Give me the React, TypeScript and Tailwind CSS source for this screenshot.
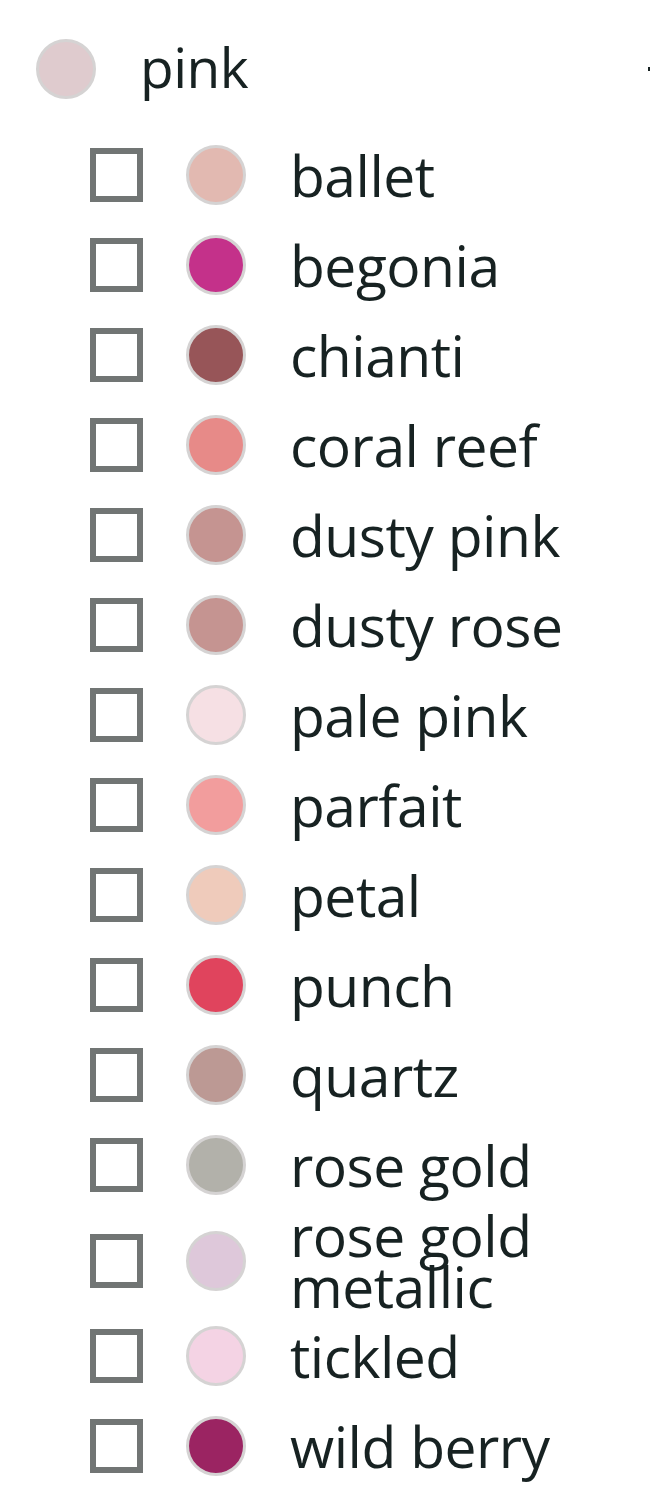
import React from "react";

type Shade = { name: string; color: string };

const shades: Shade[] = [
  { name: "ballet", color: "bg-[#e2b9b1]" },
  { name: "begonia", color: "bg-[#c4318a]" },
  { name: "chianti", color: "bg-[#975558]" },
  { name: "coral reef", color: "bg-[#e78a88]" },
  { name: "dusty pink", color: "bg-[#c59491]" },
  { name: "dusty rose", color: "bg-[#c59491]" },
  { name: "pale pink", color: "bg-[#f6e0e4]" },
  { name: "parfait", color: "bg-[#f29d9d]" },
  { name: "petal", color: "bg-[#efcbbb]" },
  { name: "punch", color: "bg-[#e0445d]" },
  { name: "quartz", color: "bg-[#bc9994]" },
  { name: "rose gold", color: "bg-[#b2b1aa]" },
  { name: "rose gold metallic", color: "bg-[#dec8da]" },
  { name: "tickled", color: "bg-[#f4d3e4]" },
  { name: "wild berry", color: "bg-[#9b2462]" },
];

function Swatch({ color }: { color: string }) {
  return <span className={`block w-[60px] h-[60px] shrink-0 rounded-full border-[3px] border-[#d5d3d3] ${color}`} />;
}

export default function App() {
  return (
    <div className="w-[650px] min-h-[1496px] bg-white text-[#172222] font-['Open_Sans','Liberation_Sans',sans-serif] overflow-hidden">
      <div className="flex items-center justify-between h-[90px] mt-[24px] pl-[36px]">
        <div className="flex items-center gap-[44px]">
          <Swatch color="bg-[#dfcbce]" />
          <span className="text-[55px] leading-none -mt-[6px] tracking-[-0.5px]">pink</span>
        </div>
        <span className="block w-[2px] h-[4px] bg-[#172222]" />
      </div>
      <ul className="mt-[16px] pl-[90px]">
        {shades.map((s) => (
          <li key={s.name} className="flex items-center min-h-[90px]">
            <span className="block w-[53px] h-[54px] shrink-0 border-[6px] border-[#717574] bg-white" />
            <span className="ml-[43px]">
              <Swatch color={s.color} />
            </span>
            <span className="ml-[44px] text-[57px] leading-[50.5px] w-[290px] tracking-[-0.5px]">{s.name}</span>
          </li>
        ))}
      </ul>
    </div>
  );
}
